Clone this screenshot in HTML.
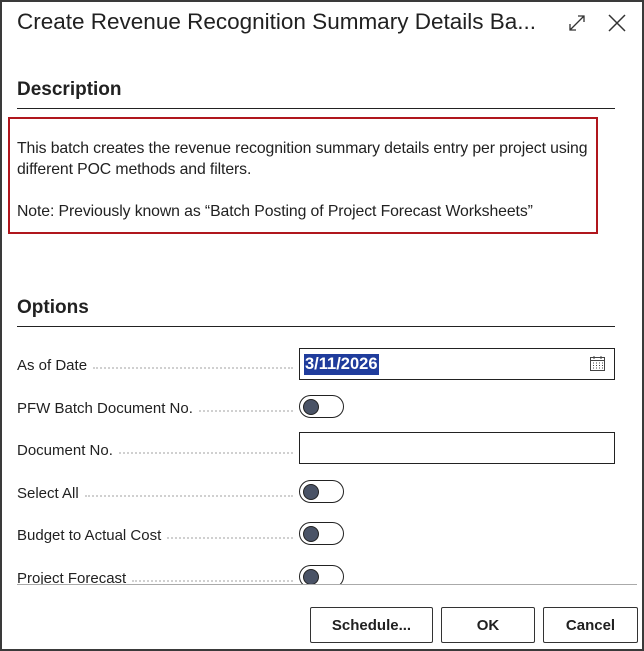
<!DOCTYPE html>
<html><head><style>
*{margin:0;padding:0;box-sizing:border-box}
body{width:644px;height:651px;background:#fff;font-family:"Segoe UI","Liberation Sans",sans-serif;color:#212121;position:relative;overflow:hidden}
.a{position:absolute;white-space:nowrap}
.lbl{position:absolute;left:17px;font-size:15px;width:290px;display:flex;align-items:center}
.lbl span{padding-right:6px}
.lbl i{flex:1;border-bottom:2px dotted #d0d0d0;height:0;margin-top:4px;margin-right:14px}
.tg{position:absolute;left:299px;width:45px;height:23px;border:1.5px solid #222;border-radius:12px}
.tg:after{content:"";position:absolute;left:3px;top:3px;width:14px;height:14px;border-radius:50%;background:#4a5366;border:1px solid #222}
.btn{position:absolute;top:607px;height:36px;border:1px solid #333;border-radius:2px;font-size:15px;font-weight:600;display:flex;align-items:center;justify-content:center}
</style></head><body>
<div class="a" style="left:17px;top:9px;font-size:22.5px">Create Revenue Recognition Summary Details Ba...</div>
<svg class="a" style="left:566px;top:12px" width="22" height="22" viewBox="0 0 22 22" fill="none" stroke="#333" stroke-width="1.3"><path d="M4 18L18 4M12 4h6v6M4 12v6h6"/></svg>
<svg class="a" style="left:606px;top:12px" width="22" height="22" viewBox="0 0 22 22" fill="none" stroke="#333" stroke-width="1.5"><path d="M3 3L19 19M19 3L3 19"/></svg>
<div class="a" style="left:17px;top:79px;font-size:19px;font-weight:600">Description</div>
<div class="a" style="left:17px;top:108px;width:598px;height:1px;background:#222"></div>
<div class="a" style="left:8px;top:117px;width:590px;height:117px;border:2px solid #b0161d"></div>
<div class="a" style="left:17px;top:138px;font-size:15.8px;line-height:21px;white-space:normal;width:580px;letter-spacing:-0.1px">This batch creates the revenue recognition summary details entry per project using different POC methods and filters.<br><br>Note: Previously known as “Batch Posting of Project Forecast Worksheets”</div>
<div class="a" style="left:17px;top:297px;font-size:19px;font-weight:600">Options</div>
<div class="a" style="left:17px;top:326px;width:598px;height:1px;background:#222"></div>
<div class="lbl" style="top:357px"><span>As of Date</span><i></i></div>
<div class="a" style="left:299px;top:348px;width:316px;height:32px;border:1px solid #222"></div>
<div class="a" style="left:304px;top:354px;background:#1f3c9c;color:#fff;font-size:16.5px;font-weight:700;padding:0 1px;height:21px;line-height:21px">3/11/2026</div>
<svg class="a" style="left:589px;top:355px" width="17" height="17" viewBox="0 0 17 17" fill="none" stroke="#444"><rect x="1.5" y="2.5" width="14" height="13"/><path d="M1.5 5.5h14M5 1v3M12 1v3M4 8h1M7 8h1M10 8h1M13 8h1M4 10.5h1M7 10.5h1M10 10.5h1M13 10.5h1M4 13h1M7 13h1M10 13h1M13 13h1"/></svg>
<div class="lbl" style="top:400px"><span>PFW Batch Document No.</span><i></i></div>
<div class="tg" style="top:395px"></div>
<div class="lbl" style="top:442px"><span>Document No.</span><i></i></div>
<div class="a" style="left:299px;top:432px;width:316px;height:32px;border:1px solid #222"></div>
<div class="lbl" style="top:485px"><span>Select All</span><i></i></div>
<div class="tg" style="top:480px"></div>
<div class="lbl" style="top:527px"><span>Budget to Actual Cost</span><i></i></div>
<div class="tg" style="top:522px"></div>
<div class="lbl" style="top:570px"><span>Project Forecast</span><i></i></div>
<div class="tg" style="top:565px"></div>
<div class="a" style="left:0;top:585px;width:644px;height:66px;background:#fff"></div>
<div class="a" style="left:17px;top:584px;width:620px;height:1px;background:#aaa"></div>
<div class="a" style="left:0;top:0;width:644px;height:2px;background:#3a3a3a"></div>
<div class="a" style="left:0;top:0;width:2px;height:651px;background:#3a3a3a"></div>
<div class="a" style="left:642px;top:0;width:2px;height:651px;background:#3a3a3a"></div>
<div class="a" style="left:0;top:649px;width:644px;height:2px;background:#3a3a3a"></div>
<div class="btn" style="left:310px;width:123px">Schedule...</div>
<div class="btn" style="left:441px;width:94px">OK</div>
<div class="btn" style="left:543px;width:95px">Cancel</div>
</body></html>
